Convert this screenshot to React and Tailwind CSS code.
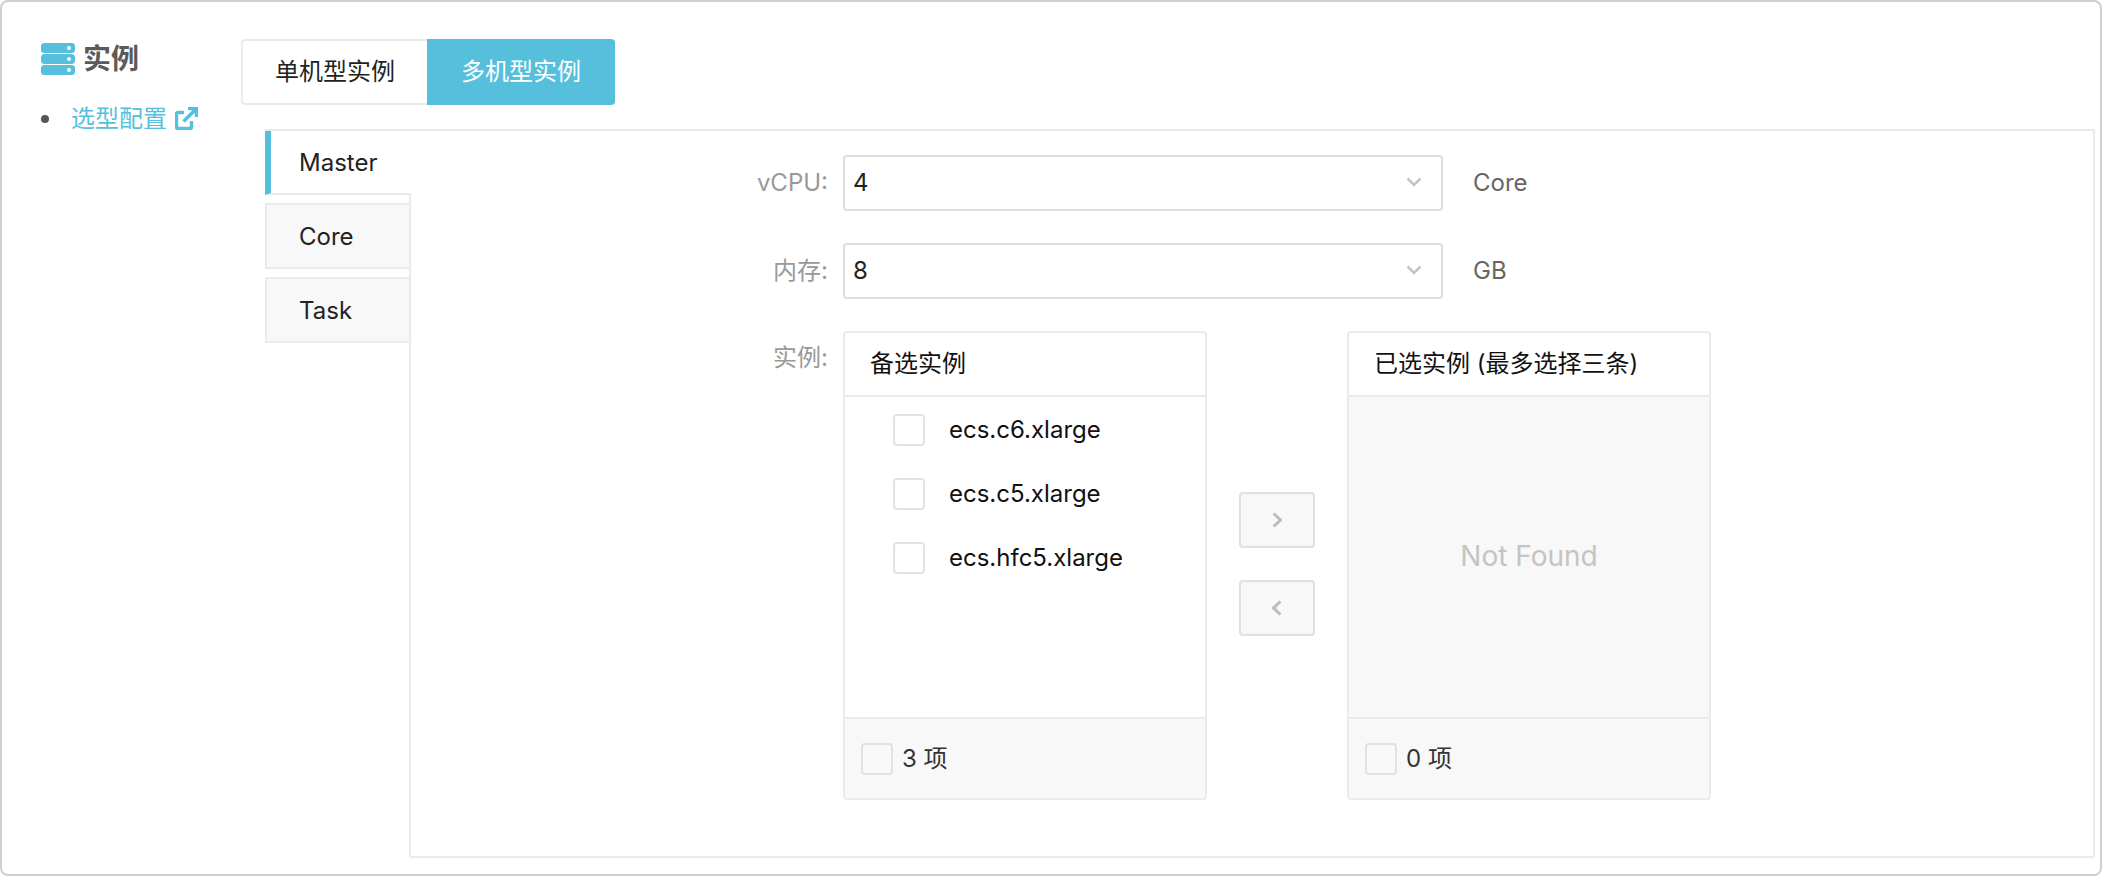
function Chevron({ dir }) {
  const d = dir === "right" ? "M1.5 1.5 L8.5 8 L1.5 14.5" : "M8.5 1.5 L1.5 8 L8.5 14.5";
  return (
    <svg width="10" height="16" viewBox="0 0 10 16" fill="none" stroke="#bdbdbd" strokeWidth="3">
      <path d={d} />
    </svg>
  );
}
function Select({ value, unit, label }) {
  return (
    <div className="flex items-center h-[56px]">
      <div className="w-[417px] text-right text-[#999999]">{label}</div>
      <div className="ml-[15px] w-[600px] h-[56px] flex items-center justify-between box-border border-2 border-[#dddddd] rounded-[4px] pl-[8px] pr-[19px] text-[#222222]">
        <span>{value}</span>
        <svg width="16" height="10" viewBox="0 0 16 10" fill="none" stroke="#c4c4c4" strokeWidth="2.5" className="-mt-[3px]">
          <path d="M1.5 1.5 L8 8 L14.5 1.5" />
        </svg>
      </div>
      <div className="ml-[30px] text-[#666666]">{unit}</div>
    </div>
  );
}
function Check({ className = "" }) {
  return <div className={"w-[32px] h-[32px] shrink-0 box-border border-2 border-[#e2e2e2] rounded-[4px] " + className} />;
}
function ListPanel({ title, count, children, muted }) {
  return (
    <div className="w-[364px] h-[469px] box-border border-2 border-[#ebebeb] rounded-[4px] flex flex-col overflow-hidden">
      <div className="h-[64px] shrink-0 box-border flex items-center pl-[25px] text-[#111111] border-b-2 border-[#ebebeb]">{title}</div>
      <div className={"flex-1 " + (muted ? "bg-[#f8f8f8] flex items-center justify-center text-[#c4c4c4] text-[28px] pb-[2px]" : "bg-white pt-[17px] pl-[48px] text-[#111111] flex flex-col gap-[32px]")}>{children}</div>
      <div className="h-[81px] shrink-0 box-border border-t-2 border-[#ebebeb] bg-[#f8f8f8] flex items-center pl-[16px] gap-[9px] text-[#333333]">
        <Check className="bg-[#f8f8f8]" />
        <span>{count} 项</span>
      </div>
    </div>
  );
}
function Row({ name }) {
  return (
    <div className="flex items-center gap-[24px] h-[32px]">
      <Check />
      <span>{name}</span>
    </div>
  );
}
function SideTab({ name, active }) {
  if (active) {
    return (
      <div className="relative -mr-[2px] h-[64px] box-border border-b-2 border-[#ebebeb] border-l-[6px] border-l-[#55bfdc] bg-white pl-[28px] pt-[1px] flex items-center text-[#222222]">
        {name}
      </div>
    );
  }
  return (
    <div className="relative -mr-[2px] h-[66px] box-border border-2 border-[#ebebeb] bg-[#f8f8f8] pl-[32px] pt-[1px] flex items-center text-[#222222]">{name}</div>
  );
}
export default function App() {
  return (
    <div className="w-[2102px] h-[876px] box-border border-2 border-[#cfcfcf] rounded-[8px] bg-white flex overflow-hidden text-[24px] leading-none [font-family:Inter,'Noto_Sans_CJK_SC',sans-serif]">
      <aside className="w-[239px] shrink-0 pl-[39px] pt-[41px]">
        <div className="flex items-center gap-[8px] h-[32px] text-[28px] font-bold text-[#5a5a5a]">
          <svg width="34" height="32" viewBox="0 0 34 32" className="shrink-0">
            <rect x="0" y="0" width="34" height="10" rx="3.5" fill="#55bfdc" />
            <rect x="0" y="11" width="34" height="10" rx="3.5" fill="#55bfdc" />
            <rect x="0" y="22" width="34" height="10" rx="3.5" fill="#55bfdc" />
            <circle cx="28" cy="5" r="2" fill="#fff" />
            <circle cx="28" cy="16" r="2" fill="#fff" />
            <circle cx="28" cy="27" r="2" fill="#fff" />
          </svg>
          <span>实例</span>
        </div>
        <div className="flex items-center mt-[32px] h-[24px]">
          <span className="w-[8px] h-[8px] rounded-full bg-[#555555] shrink-0" />
          <span className="ml-[22px] text-[#55bfdc]">选型配置</span>
          <svg width="23" height="23" viewBox="0 0 23 23" fill="none" stroke="#55bfdc" strokeWidth="3.4" className="ml-[8px] shrink-0 -mt-[2px]">
            <path d="M9 5.5 H3 a1.5 1.5 0 0 0 -1.5 1.5 V20 a1.5 1.5 0 0 0 1.5 1.5 H15 a1.5 1.5 0 0 0 1.5 -1.5 V14" />
            <path d="M8.5 14.5 L20 3" />
            <path d="M13 1.6 H21.4 V10" />
          </svg>
        </div>
      </aside>
      <main className="flex-1 pt-[37px] flex flex-col">
        <div className="flex h-[66px]">
          <div className="w-[186px] box-border border-2 border-r-0 border-[#ebebeb] rounded-l-[4px] flex items-center justify-center text-[#222222]">单机型实例</div>
          <div className="w-[188px] bg-[#55bfdc] rounded-r-[4px] flex items-center justify-center text-white">多机型实例</div>
        </div>
        <div className="mt-[24px] ml-[24px] w-[1830px] h-[729px] flex">
          <div className="w-[144px] shrink-0 box-border border-t-2 border-[#ebebeb] flex flex-col relative">
            <SideTab name="Master" active />
            <div className="mt-[8px] flex flex-col gap-[8px]">
              <SideTab name="Core" />
              <SideTab name="Task" />
            </div>
          </div>
          <div className="flex-1 box-border border-2 border-[#ebebeb] pt-[24px] flex flex-col gap-[32px]">
            <Select label="vCPU:" value="4" unit="Core" />
            <Select label="内存:" value="8" unit="GB" />
            <div className="flex items-start">
              <div className="w-[417px] text-right text-[#999999] pt-[15px]">实例:</div>
              <div className="ml-[15px] flex items-center">
                <ListPanel title="备选实例" count="3">
                  <Row name="ecs.c6.xlarge" />
                  <Row name="ecs.c5.xlarge" />
                  <Row name="ecs.hfc5.xlarge" />
                </ListPanel>
                <div className="w-[140px] -mt-[4px] flex flex-col items-center gap-[32px]">
                  <div className="w-[76px] h-[56px] box-border border-2 border-[#e0e0e0] rounded-[4px] bg-[#f8f8f8] flex items-center justify-center"><Chevron dir="right" /></div>
                  <div className="w-[76px] h-[56px] box-border border-2 border-[#e0e0e0] rounded-[4px] bg-[#f8f8f8] flex items-center justify-center"><Chevron dir="left" /></div>
                </div>
                <ListPanel title="已选实例 (最多选择三条)" count="0" muted>Not Found</ListPanel>
              </div>
            </div>
          </div>
        </div>
      </main>
    </div>
  );
}
